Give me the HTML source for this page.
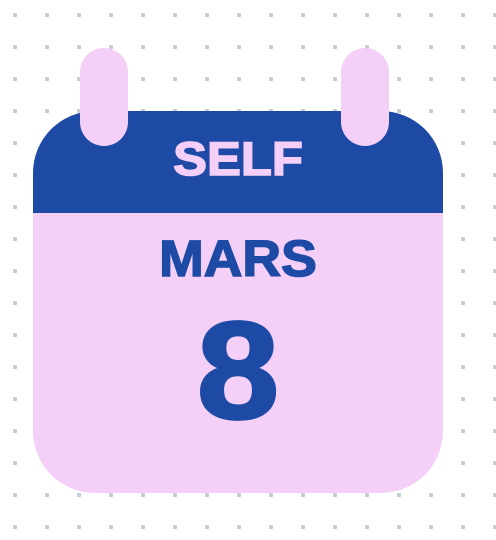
<!DOCTYPE html>
<html><head><meta charset="utf-8"><style>
html,body{margin:0;padding:0;}
body{width:496px;height:540px;position:relative;overflow:hidden;background:#fff;}
.cal{position:absolute;left:33px;top:111px;width:410px;height:382px;background:#f4cff8;border-radius:62px;overflow:hidden;}
.head{position:absolute;left:0;top:0;width:410px;height:102px;background:#1d4aa5;}
.tab{position:absolute;top:48px;width:48px;height:98px;border-radius:24px;background:#f4cff8;}
.t{position:absolute;left:33px;width:410px;text-align:center;font-family:"Liberation Sans",sans-serif;font-weight:bold;line-height:1;}
</style></head><body>
<svg width="496" height="540" style="position:absolute;left:0;top:0">
<defs><pattern id="p" x="13" y="13" width="32" height="32" patternUnits="userSpaceOnUse"><rect width="4" height="4" fill="#c9cdd6"/></pattern></defs>
<rect width="496" height="540" fill="url(#p)"/>
</svg>
<div class="cal"><div class="head"></div></div>
<div class="tab" style="left:80px"></div>
<div class="tab" style="left:341px"></div>
<div class="t" style="top:135px;font-size:47px;color:#f4cff8;-webkit-text-stroke:1.5px #f4cff8;transform:scaleX(1.08);">SELF</div>
<div class="t" style="top:233px;font-size:51px;color:#1d4aa5;-webkit-text-stroke:1.5px #1d4aa5;transform:scaleX(1.05);">MARS</div>
<div class="t" style="top:302px;font-size:138px;color:#1d4aa5;-webkit-text-stroke:3px #1d4aa5;transform:scaleX(1.07);">8</div>
</body></html>
